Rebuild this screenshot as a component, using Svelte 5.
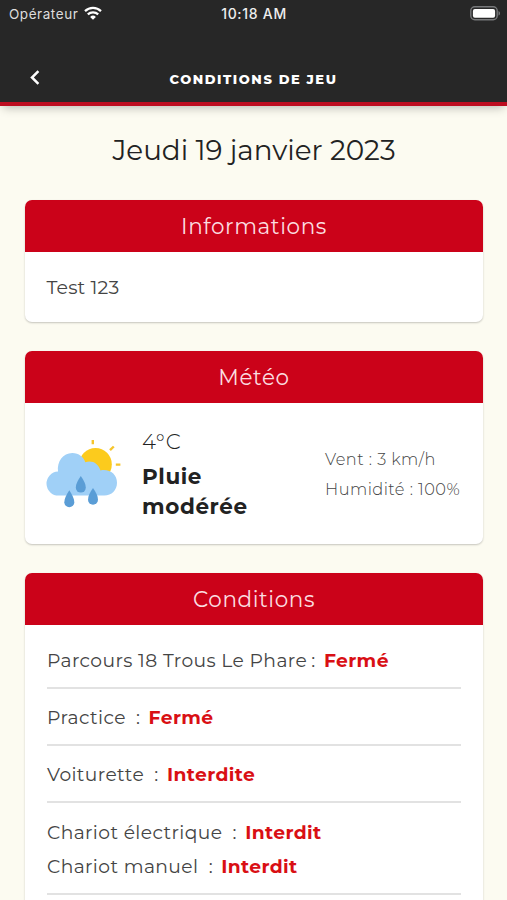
<script lang="ts">
  interface Condition {
    label: string;
    status: string;
    tight?: boolean;
  }

  const groups: Condition[][] = [
    [{ label: 'Parcours 18 Trous Le Phare', status: 'Fermé', tight: true }],
    [{ label: 'Practice', status: 'Fermé' }],
    [{ label: 'Voiturette', status: 'Interdite' }],
    [
      { label: 'Chariot électrique', status: 'Interdit' },
      { label: 'Chariot manuel', status: 'Interdit' },
    ],
  ];
</script>

<div class="screen">
  <header>
    <div class="status-bar">
      <div class="carrier">
        <span>Opérateur</span>
        <svg class="wifi" viewBox="0 0 18 14" width="18" height="14">
          <path d="M1 5.1a11.5 11.5 0 0 1 16 0" />
          <path d="M3.8 8.4a7.5 7.5 0 0 1 10.4 0" />
          <path class="dot" d="M9 13.8 6.1 10.9a4.1 4.1 0 0 1 5.8 0z" />
        </svg>
      </div>
      <span class="time">10:18 AM</span>
      <svg class="battery" viewBox="0 0 31 15" width="31" height="15">
        <rect class="shell" x="0.8" y="0.8" width="26.4" height="13" rx="4" />
        <rect x="2.9" y="2.9" width="22.2" height="8.8" rx="2" fill="#fff" />
        <path d="M28.5 5v4.6c2-.8 2-3.8 0-4.6z" fill="#77787a" />
      </svg>
    </div>
    <nav>
      <svg class="back" viewBox="0 0 10 15" width="10" height="15">
        <path d="M8.4 1.2 2 7.5l6.4 6.3" />
      </svg>
      <h1>CONDITIONS DE JEU</h1>
    </nav>
  </header>

  <main>
    <h2>Jeudi 19 janvier 2023</h2>

    <section class="card">
      <h3>Informations</h3>
      <p class="info">Test 123</p>
    </section>

    <section class="card">
      <h3>Météo</h3>
      <div class="weather">
        <svg viewBox="16 18 76 72" width="76" height="72">
          <g stroke="#f6c52c" stroke-width="2.4">
            <path d="M62.8 20v4.2M80 30.2l3.8-3.7M85.8 44.6h4.6" />
          </g>
          <circle cx="65.5" cy="44.2" r="16.3" fill="#fccb1d" />
          <path
            d="M29 75.6a12 12 0 0 1-1-24C26.8 41.5 33 33 42.3 33c6.7 0 11.2 4 13 9.2 7-2.3 13 1.3 15.2 8.2C80 48.7 87 54.5 87 62.8c0 7.3-5.4 12.8-12.6 12.8z"
            fill="#a0d0f7"
          />
          <g fill="#5a9dd6">
            <path d="M50.8 56c2.8 4.2 5 7.8 5 11.6a5 5 0 0 1-10 0c0-3.8 2.2-7.4 5-11.6z" />
            <path d="M39.3 70.2c2.8 4.4 5 8.2 5 12a5 5 0 0 1-10 0c0-3.8 2.2-7.6 5-12z" />
            <path d="M63 68c2.8 4.2 5 7.8 5 11.8a5 5 0 0 1-10 0c0-4 2.2-7.6 5-11.8z" />
          </g>
        </svg>
        <div class="summary">
          <span class="temperature">4°C</span>
          <strong>Pluie<br />modérée</strong>
        </div>
        <div class="details">
          <span>Vent : 3 km/h</span>
          <span>Humidité : 100%</span>
        </div>
      </div>
    </section>

    <section class="card">
      <h3>Conditions</h3>
      <div class="groups">
        {#each groups as group}
          <div class="group">
            {#each group as item (item.label)}
              <div class="row" class:tight={item.tight}>
                <span>{item.label}</span>
                <span class="colon">:</span>
                <strong>{item.status}</strong>
              </div>
            {/each}
          </div>
        {/each}
      </div>
    </section>
  </main>
</div>

<style>
  :global(body) {
    background: #fcfbf1;
    overflow: hidden;
  }

  .screen {
    height: 900px;
    overflow: hidden;
    background: #fcfbf1;
    color: #222;
    font-family: Montserrat, Inter, sans-serif;
  }

  header {
    position: relative;
    box-sizing: border-box;
    height: 106px;
    background: #272727;
    border-bottom: 4px solid #bd0d20;
    box-shadow: 0 5px 9px -3px rgba(0, 0, 0, 0.25);
    color: #fff;
  }

  .status-bar {
    display: grid;
    grid-template-columns: 1fr auto 1fr;
    align-items: center;
    height: 27px;
    padding: 0 6px 0 9px;
    font-family: Inter, sans-serif;
    font-size: 13.5px;
  }

  .carrier {
    display: flex;
    align-items: center;
    gap: 6px;
    color: #ddd;
    letter-spacing: 0.55px;
  }

  .wifi {
    margin-top: -2px;
  }

  .wifi path {
    fill: none;
    stroke: #fff;
    stroke-width: 2.2;
  }

  .wifi .dot {
    fill: #fff;
    stroke: none;
  }

  .time {
    margin-left: -2px;
    font-size: 14px;
    font-weight: 500;
    letter-spacing: 0.7px;
    color: #eee;
  }

  .battery {
    justify-self: end;
  }

  .shell {
    fill: none;
    stroke: #77787a;
    stroke-width: 1.4;
  }

  nav {
    display: grid;
    grid-template-columns: 60px 1fr 60px;
    align-items: center;
    height: 75px;
    box-sizing: border-box;
    padding-top: 29px;
  }

  .back {
    margin: -3px 0 0 30px;
    fill: none;
    stroke: #fff;
    stroke-width: 2.5;
  }

  h1,
  h2,
  h3,
  p {
    margin: 0;
  }

  h1 {
    text-align: center;
    font-size: 13px;
    line-height: 20px;
    font-weight: 800;
    letter-spacing: 1.55px;
  }

  main {
    padding: 0 24px 0 25px;
  }

  h2 {
    padding: 25px 0 31.4px;
    text-align: center;
    font-size: 27.8px;
    line-height: 38px;
    font-weight: 400;
  }

  .card {
    margin-bottom: 29px;
    border-radius: 7px;
    background: #fff;
    box-shadow: 0 1px 2px rgba(0, 0, 0, 0.22);
    overflow: hidden;
  }

  h3 {
    height: 52px;
    background: #cb0219;
    color: #fbdde0;
    text-align: center;
    font-size: 21.5px;
    line-height: 52px;
    font-weight: 400;
    letter-spacing: 0.6px;
  }

  .info {
    height: 70px;
    padding: 0 21.5px;
    font-size: 19px;
    line-height: 71.6px;
    letter-spacing: 0.15px;
    color: #444;
  }

  .weather {
    display: flex;
    align-items: center;
    height: 141px;
    padding-left: 21.4px;
    box-sizing: border-box;
  }

  .weather svg {
    margin-top: 1px;
  }

  .summary {
    width: 183px;
    margin-left: 19.6px;
    line-height: 30px;
    letter-spacing: 0.6px;
  }

  .temperature {
    display: block;
    margin-bottom: 5px;
    font-size: 21.3px;
    font-weight: 300;
  }

  .summary strong {
    display: block;
    font-size: 21.5px;
    font-weight: 700;
  }

  .details {
    display: flex;
    flex-direction: column;
    padding-top: 1px;
    font-size: 16.2px;
    line-height: 30.5px;
    font-weight: 300;
    letter-spacing: 0.48px;
    color: #444;
    white-space: nowrap;
  }

  .groups {
    padding: 6.2px 22px 20px;
  }

  .group {
    padding: 12.3px 0 8.6px;
    border-bottom: 2px solid #e2e2e2;
  }

  .row {
    display: flex;
    font-size: 18.7px;
    line-height: 34.4px;
    letter-spacing: 0.4px;
    color: #444;
    white-space: nowrap;
  }

  .colon {
    margin: 0 8.2px 0 10.2px;
  }

  .tight .colon {
    margin-left: 4.2px;
  }

  .row strong {
    font-weight: 700;
    color: #d90f14;
  }
</style>
